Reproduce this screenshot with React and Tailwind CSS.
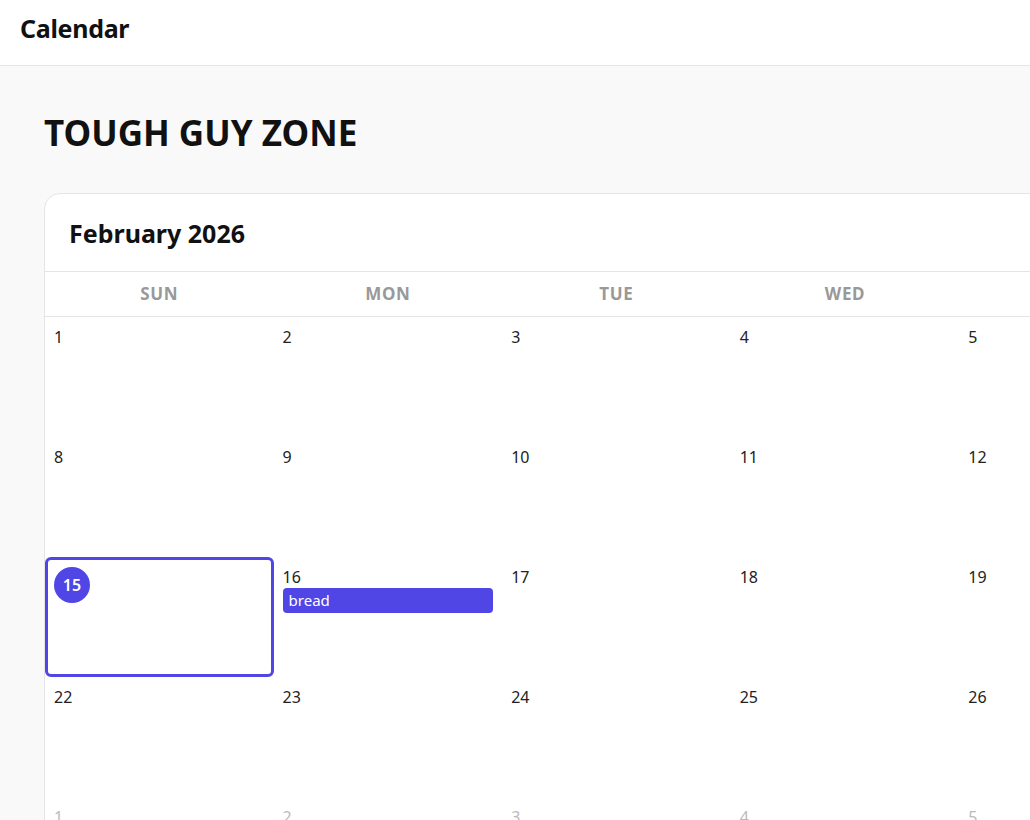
const WEEKDAYS = ['Sun', 'Mon', 'Tue', 'Wed', 'Thu', 'Fri', 'Sat'];

const events = {
  16: [{ id: 1, title: 'bread' }],
};

function buildDays() {
  // February 2026 starts on a Sunday, 28 days, then March fills the last row
  const days = [];
  for (let d = 1; d <= 28; d++) days.push({ day: d, current: true });
  for (let d = 1; d <= 7; d++) days.push({ day: d, current: false });
  return days;
}

function DayCell({ day, current, isToday }) {
  const list = current ? events[day] || [] : [];

  if (isToday) {
    return (
      <div className="h-[120px] border-[3px] border-[#4f46e5] rounded-[6px] px-[6px] pt-[7px]">
        <div className="w-9 h-9 rounded-full bg-[#4f46e5] text-white flex items-center justify-center text-[16px] font-semibold">
          {day}
        </div>
      </div>
    );
  }

  return (
    <div className="h-[120px] border border-transparent px-2 pt-[7px]">
      <div className={`text-[16px] leading-6 ${current ? 'text-[#222]' : 'text-[#bbb]'}`}>{day}</div>
      {list.map((ev) => (
        <div key={ev.id} className="mt-[-1px] h-[25px] rounded-[4px] bg-[#4f46e5] text-white text-[15px] leading-[25px] px-[6px]">
          {ev.title}
        </div>
      ))}
    </div>
  );
}

export default function App() {
  const days = buildDays();

  return (
    <div className="min-h-screen overflow-hidden bg-[#f9f9f9] text-[#111]" style={{ fontFamily: '"Noto Sans", "Open Sans", sans-serif' }}>
      <header className="h-[66px] bg-white border-b border-[#e5e5e5] flex items-center px-5 pb-2">
        <h1 className="text-[25px] font-bold tracking-[-0.3px]">Calendar</h1>
      </header>

      <main className="pl-[44px] pt-[43px]">
        <h2 className="text-[35px] font-bold leading-[48px]">TOUGH GUY ZONE</h2>

        <div className="mt-[36px] w-[1602px] bg-white border border-[#e5e5e5] rounded-2xl">
          <div className="h-[78px] flex items-center px-6 pt-[2px] border-b border-[#e5e5e5]">
            <h3 className="text-[25px] font-bold">February 2026</h3>
          </div>

          <div className="grid grid-cols-7 h-[45px] items-center border-b border-[#e5e5e5]">
            {WEEKDAYS.map((w) => (
              <div key={w} className="text-center text-[17px] font-bold uppercase tracking-[0.04em] text-[#999]">
                {w}
              </div>
            ))}
          </div>

          <div className="grid grid-cols-7">
            {days.map((d, i) => (
              <DayCell key={i} day={d.day} current={d.current} isToday={d.current && d.day === 15} />
            ))}
          </div>
        </div>
      </main>
    </div>
  );
}
